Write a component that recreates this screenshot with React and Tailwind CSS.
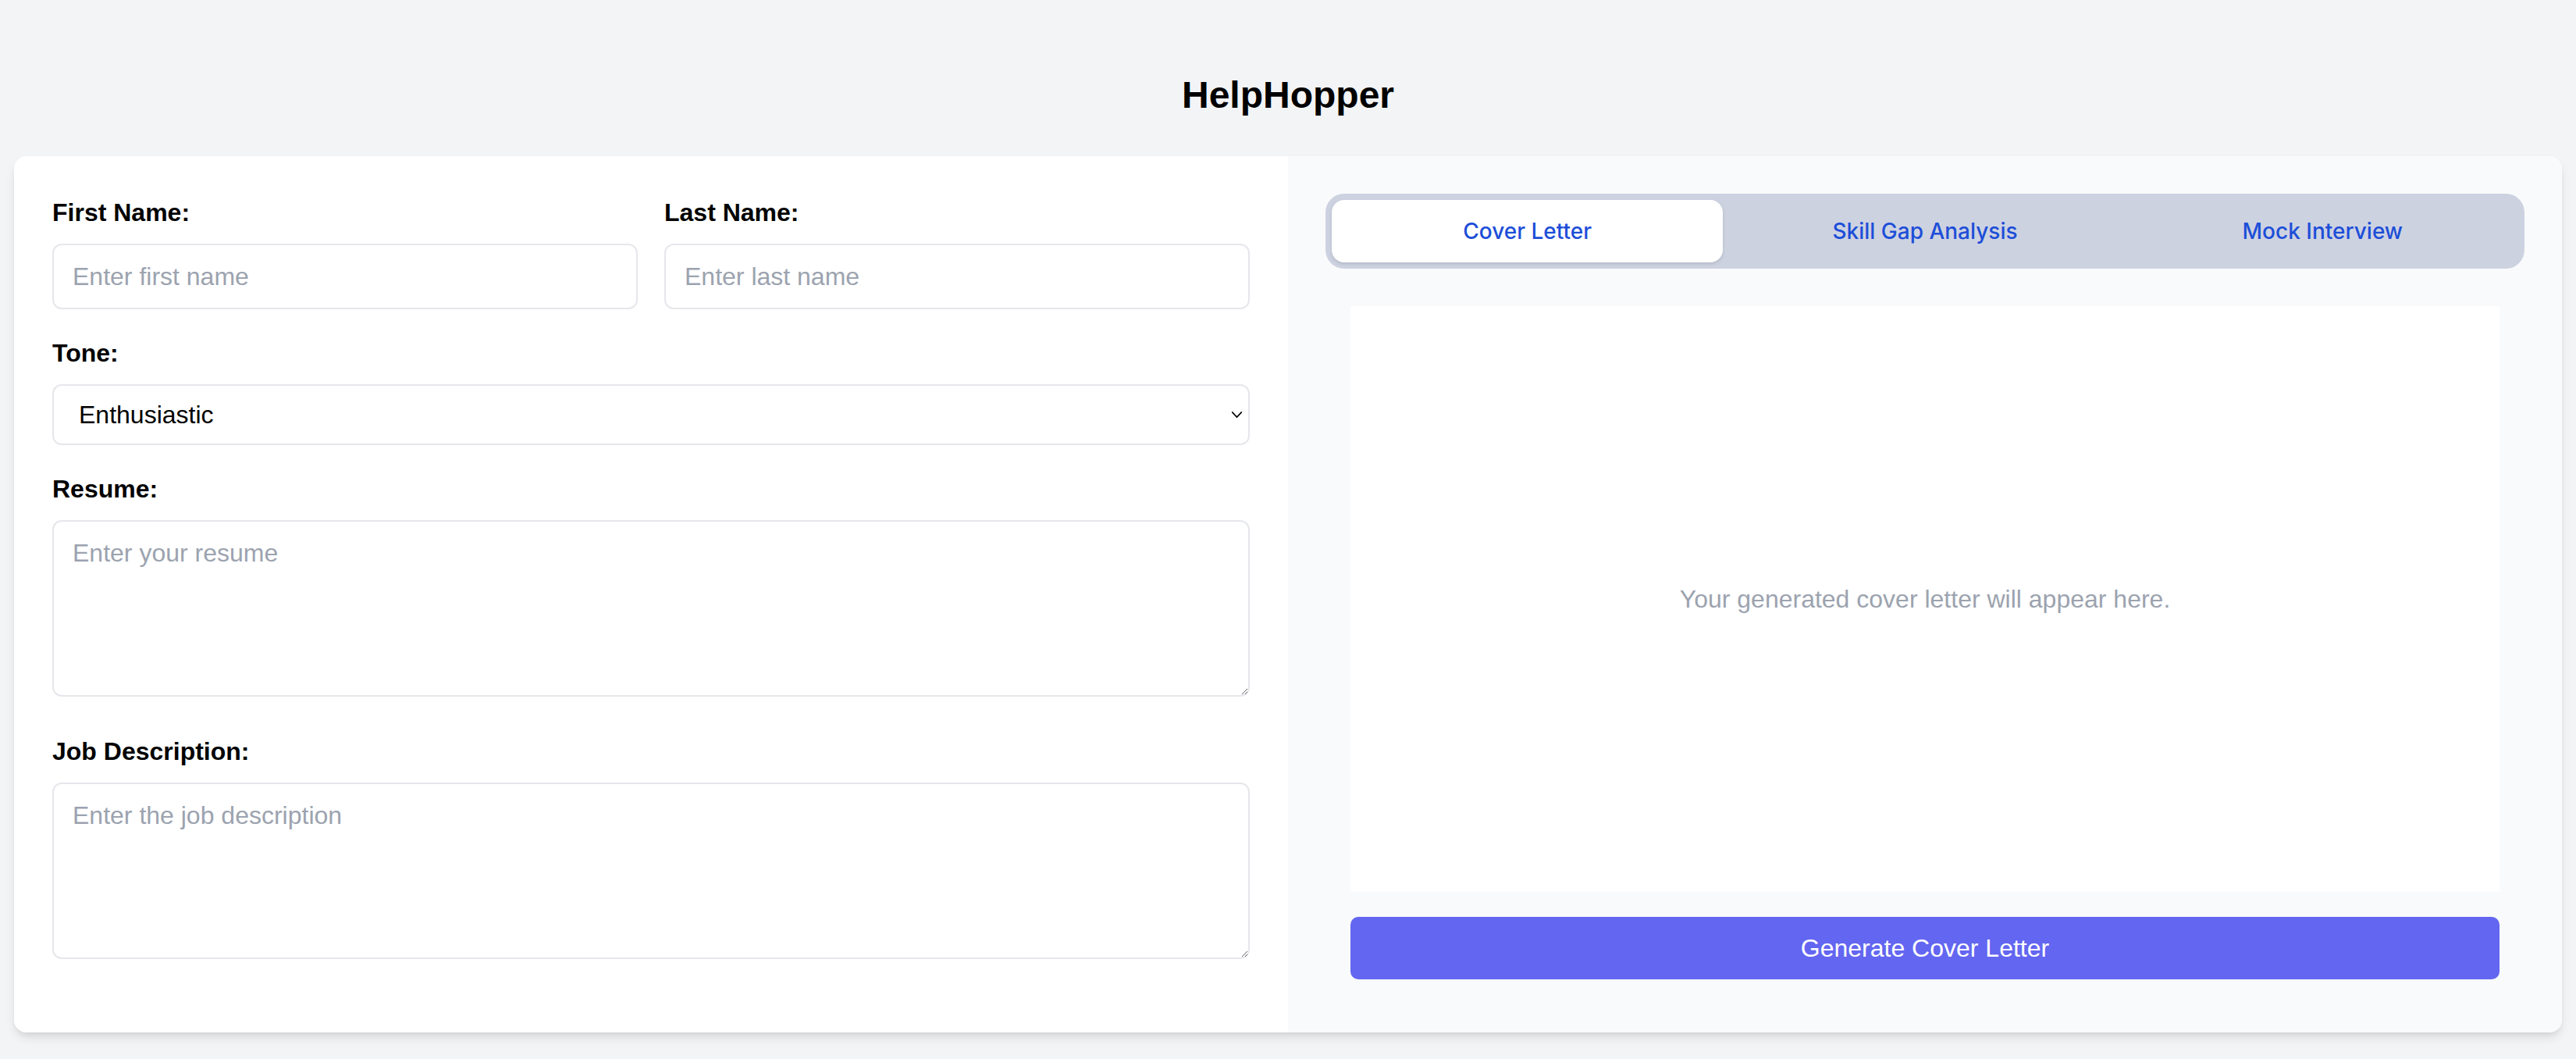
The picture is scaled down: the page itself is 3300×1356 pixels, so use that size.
import { useState } from 'react'

const tabs = ['Cover Letter', 'Skill Gap Analysis', 'Mock Interview']

function Field({ label, children, className = 'mb-[32px]' }) {
  return (
    <div className={className}>
      <label className="mb-[16px] block text-[32px] font-bold leading-[48px] text-black">
        {label}
      </label>
      {children}
    </div>
  )
}

const inputClass =
  'block w-full rounded-[12px] border-2 border-[#e5e7eb] bg-white px-[24px] py-[16px] text-[32px] leading-[48px] text-black outline-none placeholder:text-[#9ca3af]'

export default function App() {
  const [active, setActive] = useState(0)

  return (
    <div className="min-h-screen bg-[#f3f4f6] pt-[90px] font-['Liberation_Sans',Arial,sans-serif]">
      <h1 className="mb-[46px] text-center text-[48px] font-bold leading-[64px] text-black">
        HelpHopper
      </h1>

      <div className="mx-[18px] flex overflow-hidden rounded-[16px] bg-white shadow-[0_8px_14px_-2px_rgba(0,0,0,0.1),0_4px_8px_-4px_rgba(0,0,0,0.1)]">
        {/* form */}
        <div className="w-1/2 bg-white px-[49px] pt-[48px] pb-[48px]">
          <div className="mb-[32px] grid grid-cols-2 gap-[34px]">
            <div>
              <label className="mb-[16px] block text-[32px] font-bold leading-[48px] text-black">
                First Name:
              </label>
              <input className={inputClass} placeholder="Enter first name" />
            </div>
            <div>
              <label className="mb-[16px] block text-[32px] font-bold leading-[48px] text-black">
                Last Name:
              </label>
              <input className={inputClass} placeholder="Enter last name" />
            </div>
          </div>

          <Field label="Tone:">
            <div className="relative">
              <select
                defaultValue="Enthusiastic"
                className="block h-[78px] w-full appearance-none rounded-[12px] border-2 border-[#e5e7eb] bg-white pl-[32px] pr-[48px] text-[32px] text-black outline-none"
              >
                <option>Professional</option>
                <option>Enthusiastic</option>
                <option>Friendly</option>
              </select>
              <svg
                viewBox="0 0 16 10"
                className="pointer-events-none absolute right-[9px] top-1/2 h-[9px] w-[15px] -translate-y-1/2 text-black"
                fill="none"
                stroke="currentColor"
                strokeWidth="1.8"
                strokeLinecap="round"
                strokeLinejoin="round"
              >
                <path d="M1.5 1.5 8 8.5l6.5-7" />
              </svg>
            </div>
          </Field>

          <Field label="Resume:" className="mb-[46px]">
            <textarea
              className={`${inputClass} h-[226px] resize-y`}
              placeholder="Enter your resume"
            />
          </Field>

          <Field label="Job Description:" className="mb-[46px]">
            <textarea
              className={`${inputClass} h-[226px] resize-y`}
              placeholder="Enter the job description"
            />
          </Field>
        </div>

        {/* output */}
        <div className="w-1/2 bg-[#f9fafb] p-[48px]">
          <div className="mb-[48px] flex gap-[8px] rounded-[24px] bg-[#cdd2e1] p-[8px]">
            {tabs.map((tab, i) => (
              <button
                key={tab}
                type="button"
                onClick={() => setActive(i)}
                className={`flex-1 rounded-[16px] py-[20px] font-['Inter',sans-serif] text-[28px] leading-[40px] font-medium text-[#1d4ed8] ${
                  active === i ? 'bg-white shadow-[0_2px_4px_rgba(0,0,0,0.12)]' : ''
                }`}
              >
                {tab}
              </button>
            ))}
          </div>

          <div className="px-[32px]">
            <div className="mb-[32px] flex h-[750px] items-center justify-center bg-white">
              <p className="text-[32px] leading-[48px] text-[#9ca3af]">
                Your generated cover letter will appear here.
              </p>
            </div>
            <button
              type="button"
              className="block h-[80px] w-full rounded-[10px] bg-[#6366f1] text-[32px] text-white"
            >
              Generate Cover Letter
            </button>
          </div>
        </div>
      </div>
      <div className="h-[34px]" />
    </div>
  )
}
